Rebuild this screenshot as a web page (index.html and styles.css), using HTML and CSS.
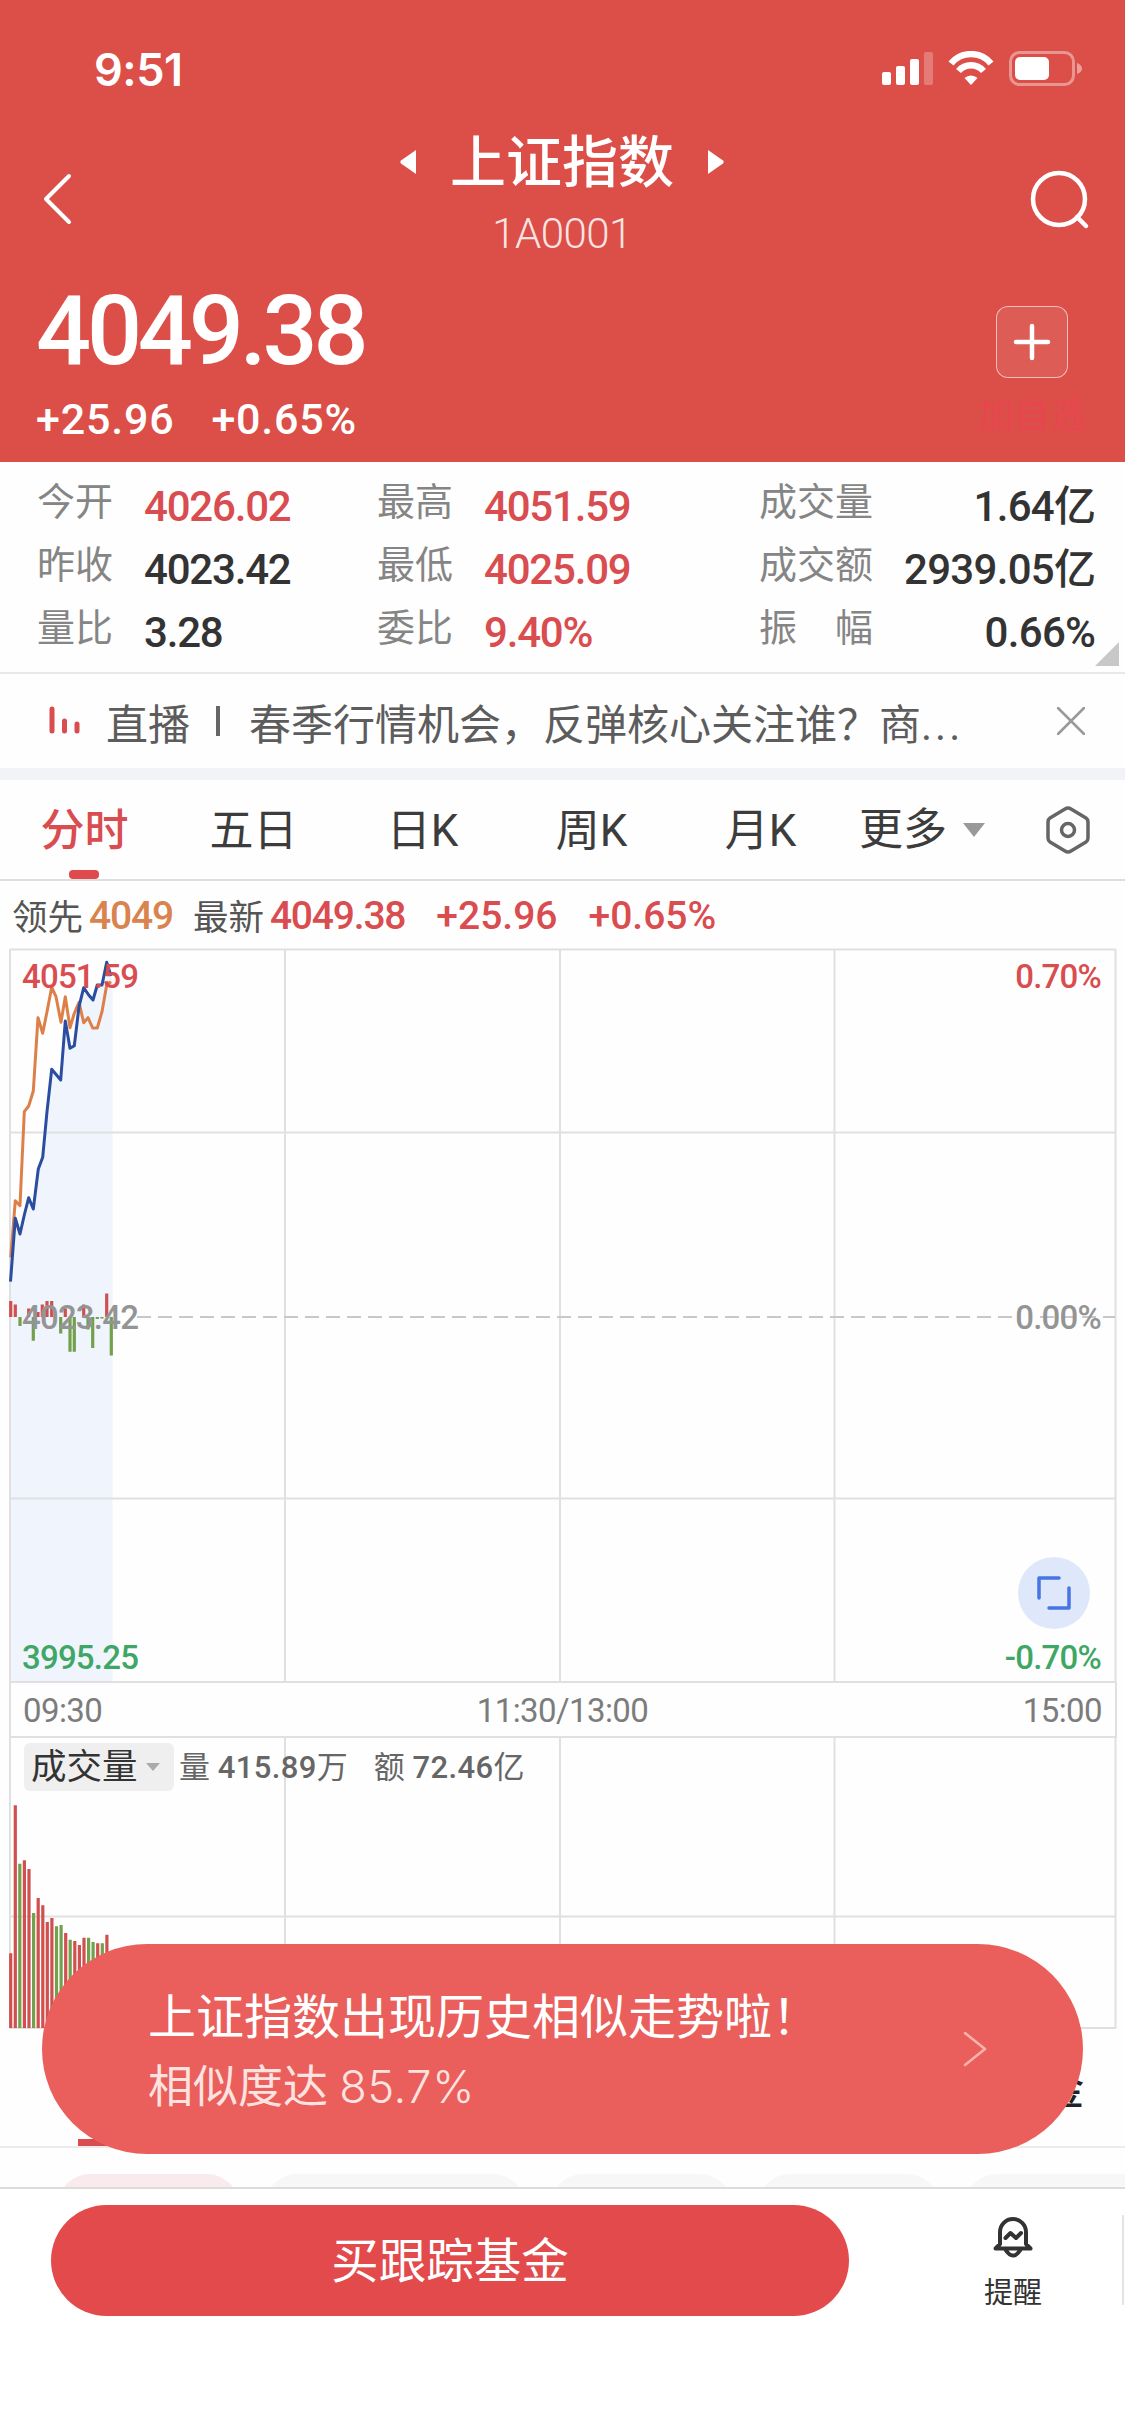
FILE: index.html
```html
<!DOCTYPE html>
<html lang="zh-CN">
    <head>
        <meta charset="utf-8">
        <title>上证指数</title>
        <link rel="stylesheet" href="styles.css">
    </head>
    <body>
        <header class="header">
            <div class="status-bar">
                <span class="status-time">9:51</span>
                <svg class="status-icons" width="202" height="36" viewBox="0 0 202 36">
                    <g fill="#fff">
                        <rect x="0" y="21" width="9" height="13" rx="2"/>
                        <rect x="14" y="15" width="9" height="19" rx="2"/>
                        <rect x="28" y="8" width="9" height="26" rx="2"/>
                        <rect x="42" y="1" width="9" height="33" rx="2" opacity=".25"/>
                    </g>
                    <g fill="none" stroke="#fff" stroke-width="6.5">
                        <path d="M69 12.5a26 26 0 0 1 40 0"/>
                        <path d="M76.500 20a16.500 16.500 0 0 1 25 0"/>
                    </g>
                    <path d="M82.500 27a9.500 9.500 0 0 1 13 0l-6.500 7z" fill="#fff"/>
                    <rect x="128.500" y="1.500" width="63" height="32" rx="9" fill="none" stroke="#fff" stroke-width="3" opacity=".4"/>
                    <rect x="133" y="6" width="34" height="23" rx="5" fill="#fff"/>
                    <path d="M195 12q5 2 5 5.500t-5 5.500z" fill="#fff" opacity=".45"/>
                </svg>
            </div>
            <nav class="navbar">
                <svg class="back" width="30" height="52" viewBox="0 0 30 52"><path d="M27 3L4 26l23 23"/></svg>
                <div class="navbar-title">
                    <div class="navbar-name">
                        <svg width="20" height="28" viewBox="0 0 20 28"><path d="M17 2v24L2 15.500q-1.500-1.500 0-3z"/></svg>
                        <h1>上证指数</h1>
                        <svg width="20" height="28" viewBox="0 0 20 28"><path d="M3 2v24l15-10.500q1.500-1.500 0-3z"/></svg>
                    </div>
                    <div class="navbar-code">1A0001</div>
                </div>
                <svg class="search" width="60" height="60" viewBox="0 0 60 60"><circle cx="29" cy="29" r="26"/><path d="M47 47l9 9"/></svg>
            </nav>
            <div class="quote">
                <div>
                    <div class="price">4049.38</div>
                    <div class="change"><span>+25.96</span><span>+0.65%</span></div>
                </div>
                <div class="add">
                    <button type="button" class="add-button">
                        <svg width="40" height="40" viewBox="0 0 40 40"><path d="M20 4v32M4 20h32"/></svg>
                    </button>
                    <span class="add-label">加自选</span>
                </div>
            </div>
        </header>
        <main>
            <section class="stats">
                <div class="stat"><span>今开</span><b class="red">4026.02</b></div>
                <div class="stat"><span>最高</span><b class="red">4051.59</b></div>
                <div class="stat wide"><span>成交量</span><b>1.64亿</b></div>
                <div class="stat"><span>昨收</span><b>4023.42</b></div>
                <div class="stat"><span>最低</span><b class="red">4025.09</b></div>
                <div class="stat wide"><span>成交额</span><b>2939.05亿</b></div>
                <div class="stat"><span>量比</span><b>3.28</b></div>
                <div class="stat"><span>委比</span><b class="red">9.40%</b></div>
                <div class="stat wide"><span>振　幅</span><b>0.66%</b></div>
                <div class="stats-corner"></div>
            </section>
            <section class="news">
                <svg width="32" height="30" viewBox="0 0 32 30"><path d="M3 3v22M15.500 15v10M28 18v7"/></svg>
                <span class="news-tag">直播</span>
                <span class="news-line"></span>
                <span class="news-text">春季行情机会，反弹核心关注谁？商<span class="dots">...</span></span>
                <svg class="news-close" width="28" height="28" viewBox="0 0 28 28"><path d="M1 1l26 26M27 1L1 27"/></svg>
            </section>
            <nav class="tabs">
                <a class="active">分时</a>
                <a>五日</a>
                <a>日K</a>
                <a>周K</a>
                <a>月K</a>
                <a class="more">更多<i></i></a>
                <svg width="46" height="50" viewBox="0 0 46 50"><path d="M23 3q1.500 0 3 1l15 9q2 1.300 2 4v16q0 2.700-2 4l-15 9q-3 2-6 0l-15-9q-2-1.300-2-4V17q0-2.700 2-4l15-9q1.500-1 3-1z"/><circle cx="23" cy="25" r="6.500"/></svg>
            </nav>
            <div class="legend">
                <span>领先</span><b class="orange">4049</b>
                <span class="latest">最新</span><b>4049.38</b><b class="diff">+25.96</b><b class="rate">+0.65%</b>
            </div>

            <section class="chart">
                <svg class="plot" width="1125" height="735" viewBox="0 0 1125 735">
                    <path class="area" d="M10.500 333.700L15.300 270.300 20 286 24.300 267 28.700 249.700 33.300 261 38.300 221 42.700 209.300 47 163.700 51.700 121.300 60.700 132 65.300 73 70 100.300 74.300 97.700 79 58.700 83.700 39.700 88.700 47 93 52 97.300 37 102 37 106.700 14.300 112.500 33V734H10.500z"/>
                    <path class="grid" d="M10 1.500H1115.500V734H10zM285 1V734M560 1V734M834.500 1V734M10 184.500H1115M10 550.500H1115"/>
                    <path class="zero" d="M137 369H1018M1040 369H1115"/>
                    <path class="up" d="M10.700 369V353M15.300 369V356.500M28.700 369V360.500M38 369V364M42.300 369V356.500M47 369V353M51.700 369V353M65.300 369V360.500M83.700 369V356.500M106.700 369V345.500"/>
                    <path class="down" d="M20 369V378M33.300 369V392.700M60.700 369V385.500M70 369V403.700M74.300 369V403.700M88 369V381.500M92.700 369V400M97.300 369V371M102 369V370.500M111.300 369V407.500"/>
                    <path class="line-lead" d="M10.700 309.300L15.300 252.700 20 257.700 24.300 163.700 28.700 158 33.300 143 38 69.700 42.700 85.300 47 63.700 51.700 39.300 56 48.700 61 74.300 65.300 48.700 70 79.700 74.300 65.300 79 54.300 83.700 74.700 88 69.700 92.700 80 97.300 80 102 63.700 106.700 37 111 33.700"/>
                    <path class="line-price" d="M10.500 333.700L15.300 270.300 20 286 24.300 267 28.700 249.700 33.300 261 38.300 221 42.700 209.300 47 163.700 51.700 121.300 60.700 132 65.300 73 70 100.300 74.300 97.700 79 58.700 83.700 39.700 88.700 47 93 52 97.300 37 102 37 106.700 14.300 111 28"/>
                </svg>
                <div class="scale">
                    <div class="scale-row red"><span>4051.59</span><span>0.70%</span></div>
                    <div class="scale-row"><span>4023.42</span><span>0.00%</span></div>
                    <div class="scale-row green"><span>3995.25</span><span>-0.70%</span></div>
                </div>
                <button type="button" class="expand">
                    <svg width="34" height="34" viewBox="0 0 34 34"><path d="M2 22V2h20M32 12v20H12"/></svg>
                </button>
            </section>
            <div class="times"><span>09:30</span><span>11:30/13:00</span><span>15:00</span></div>

            <section class="volume">
                <svg class="plot" width="1125" height="292" viewBox="0 0 1125 292">
                    <path class="grid" d="M10 0V290H1115.500V0M285 0V290M560 0V290M834.500 0V290M10 178.500H1115"/>
                    <path class="up" d="M10.700 290V215.300M15.300 290V67.300M24.400 290V122.300M29 290V131M38.200 290V160M42.800 290V167.300M47.300 290V184M51.900 290V180M65.700 290V195M74.800 290V203M79.400 290V207M84 290V199.700M97.700 290V205.300M106.900 290V196.700"/>
                    <path class="down" d="M19.800 290V125.700M33.600 290V175M56.500 290V188.300M61.100 290V187M70.200 290V201.700M88.600 290V199.700M93.100 290V204M102.300 290V205.300"/>
                </svg>
                <div class="volume-head">
                    <span class="volume-type">成交量<i></i></span>
                    <span class="volume-num">量 <em>415.89</em>万</span>
                    <span class="volume-sum">额 <em>72.46</em>亿</span>
                </div>
            </section>

            <section class="related">
                <div class="related-tabs"><span>基金</span></div>
                <div class="chips">
                    <i class="chip on"></i><i class="chip c2"></i><i class="chip"></i><i class="chip"></i><i class="chip c5"></i>
                </div>
            </section>
        </main>
        <footer class="footer">
            <a class="buy">买跟踪基金</a>
            <a class="remind">
                <svg width="42" height="44" viewBox="0 0 42 44"><path d="M8 29V17a13 13 0 0 1 26 0v12l4.500 4.500h-35zM13 34q8 13 16 0M13.500 23l5-5 5.500 5 5-5"/></svg>
                <span>提醒</span>
            </a>
        </footer>
        <aside class="toast">
            <div>
                <div class="toast-title">上证指数出现历史相似走势啦！</div>
                <div class="toast-text">相似度达 <span>85.7%</span></div>
            </div>
            <svg width="24" height="36" viewBox="0 0 24 36"><path d="M2 2l20 16L2 34"/></svg>
        </aside>
    </body>
</html>
```

FILE: styles.css
```css
:root {
    --header: #db4f48;
    --red: #d94c4f;
    --green: #3fa765;
    --line: #e0e0e2;
    --num: Roboto, "Noto Sans CJK SC", sans-serif;
}

*, *::before, *::after {
    box-sizing: border-box;
}

body {
    position: relative;
    margin: 0;
    width: 1125px;
    height: 2436px;
    overflow: hidden;
    background: #fefefe;
    color: #333;
    font-family: var(--num);
    white-space: nowrap;
}

svg {
    display: block;
    flex: none;
    fill: none;
    stroke-linecap: round;
    stroke-linejoin: round;
}

button {
    padding: 0;
    display: flex;
    align-items: center;
    justify-content: center;
}

b {
    font-weight: 500;
}

.red {
    color: var(--red);
}

/* header */
.header {
    height: 462px;
    background: var(--header);
    color: #fff;
}

.status-bar {
    display: flex;
    justify-content: space-between;
    height: 128px;
    padding: 51px 41px 0 94px;
}

.status-time {
    margin-top: -8px;
    font: 600 45px/54px Inter, sans-serif;
    letter-spacing: -0.5px;
}

.status-icons {
    stroke-linecap: butt;
}

.navbar {
    display: flex;
    justify-content: space-between;
    height: 148px;
    padding: 0 35px 0 42px;
}

.back {
    margin-top: 45px;
    stroke: #fff;
    stroke-width: 4;
}

.search {
    margin-top: 42px;
    stroke: #fff;
    stroke-width: 4.500;
}

.navbar-title {
    display: flex;
    flex-direction: column;
    align-items: center;
    margin-left: 22px;
}

.navbar-name {
    display: flex;
    align-items: center;
    gap: 31px;
    height: 68px;
}

.navbar-name svg {
    fill: #fff;
}

.navbar-name h1 {
    margin: 0;
    padding-top: 2px;
    font-size: 56px;
    font-weight: 500;
    line-height: 68px;
}

.navbar-code {
    margin-top: 13px;
    font-size: 42px;
    font-weight: 300;
    line-height: 50px;
    letter-spacing: -0.5px;
    opacity: .85;
}

.quote {
    display: flex;
    justify-content: space-between;
    padding: 0 35px 0 36px;
}

.price {
    margin-top: 5px;
    font-size: 97px;
    font-weight: 500;
    line-height: 100px;
    letter-spacing: -4.200px;
}

.change {
    display: flex;
    gap: 37px;
    margin-top: 12px;
    font-size: 43px;
    font-weight: 500;
    line-height: 52px;
    letter-spacing: 0.8px;
}

.add {
    display: flex;
    flex-direction: column;
    align-items: center;
    width: 116px;
    padding-top: 30px;
}

.add-button {
    width: 72px;
    height: 72px;
    border: 1.500px solid rgba(255, 255, 255, .6);
    border-radius: 12px;
    background: rgba(255, 255, 255, .08);
}

.add-button svg {
    stroke: #fff;
    stroke-width: 4.500;
}

.add-label {
    margin-top: 16px;
    font-size: 36px;
    line-height: 44px;
    color: #e9454f;
}

/* stats */
.stats {
    position: relative;
    display: grid;
    grid-template-columns: 340px 382px 1fr;
    grid-auto-rows: 63px;
    height: 212px;
    padding: 10px 32px 0 37px;
    border-bottom: 2px solid #e8e8ea;
}

.stat {
    display: flex;
    align-items: center;
    gap: 31px;
    line-height: 59px;
}

.stat span {
    margin-top: -2px;
    font-size: 38px;
    color: #858585;
}

.stat b {
    padding-top: 5px;
    font-size: 42px;
    letter-spacing: -1.200px;
}

.stat.wide {
    justify-content: space-between;
}

.stat.wide b {
    letter-spacing: -0.7px;
}

.stats-corner {
    position: absolute;
    right: 6px;
    bottom: 6px;
    border: solid transparent;
    border-width: 12px;
    border-right-color: #c8c8c8;
    border-bottom-color: #c8c8c8;
}

/* news */
.news {
    display: flex;
    align-items: center;
    height: 106px;
    padding: 0 40px 0 49px;
    border-bottom: 12px solid #f2f3f7;
    font-size: 42px;
    color: #5c5c5c;
}

.news svg {
    stroke: #d94c4f;
    stroke-width: 5;
}

.news-tag {
    margin-left: 25px;
}

.news-line {
    width: 4px;
    height: 30px;
    margin: 0 29px 0 26px;
    background: #666;
}

.dots {
    letter-spacing: 3px;
}

.news .news-close {
    margin-left: auto;
    stroke: #999;
    stroke-width: 2.500;
}

/* period tabs */
.tabs {
    display: flex;
    align-items: center;
    height: 101px;
    padding-right: 34px;
    border-bottom: 2px solid #dedede;
    font-size: 44px;
    color: #3c3c3c;
}

.tabs a {
    position: relative;
    width: 169px;
    height: 99px;
    text-align: center;
    line-height: 102px;
}

.tabs .active {
    color: var(--red);
    font-weight: 500;
}

.tabs .active::after {
    content: "";
    position: absolute;
    left: 69px;
    bottom: 0;
    width: 30px;
    height: 9px;
    border-radius: 4px;
    background: #e04a4d;
}

.tabs .more {
    display: flex;
    align-items: center;
    gap: 16px;
    width: auto;
    margin-left: 14px;
}

.more i, .volume-type i {
    border: solid transparent;
    border-width: 14px 11px 0;
    border-top-color: #999;
}

.tabs svg {
    margin-left: auto;
    stroke: #666;
    stroke-width: 3.500;
}

.legend {
    display: flex;
    align-items: center;
    height: 67px;
    padding-left: 12px;
    font-size: 35.500px;
    color: #555;
}

.legend b {
    margin: 2px 0 0 6px;
    font-size: 39px;
    letter-spacing: -1.200px;
    color: var(--red);
}

.legend .orange {
    color: #d9834f;
}

.legend .latest {
    margin-left: 20px;
}

.legend .diff, .legend .rate {
    margin-left: 31px;
    letter-spacing: 0;
}

/* charts */
.chart, .volume {
    position: relative;
    display: grid;
}

.chart {
    height: 734px;
}

.chart > *, .volume > * {
    grid-area: 1 / 1;
}

.plot {
    stroke-linecap: butt;
}

.grid {
    stroke: var(--line);
    stroke-width: 2;
}

.area {
    fill: #eff4fd;
}

.zero {
    stroke: #c8c8cc;
    stroke-width: 2;
    stroke-dasharray: 14 7;
}

.up, .down {
    stroke: #d0504f;
    stroke-width: 3.200;
}

.down {
    stroke: #72a04c;
}

.line-price, .line-lead {
    stroke: #2a4da0;
    stroke-width: 3;
}

.line-lead {
    stroke: #dd8048;
}

.scale {
    display: flex;
    flex-direction: column;
    justify-content: space-between;
    padding: 10px 24px 6px 22px;
    font-size: 33px;
    font-weight: 500;
    line-height: 38px;
    letter-spacing: -0.8px;
    color: #949494;
}

.scale-row {
    display: flex;
    justify-content: space-between;
}

.scale-row.red {
    color: var(--red);
}

.scale-row.green {
    color: var(--green);
}

.expand {
    position: absolute;
    left: 1018px;
    top: 609px;
    width: 72px;
    height: 72px;
    border: 0;
    border-radius: 50%;
    background: #dfe8fb;
}

.expand svg {
    stroke: #4874e4;
    stroke-width: 3.500;
}

.times {
    display: grid;
    grid-template-columns: 1fr 1fr 1fr;
    align-items: center;
    height: 56px;
    margin: 0 8px 0 9px;
    padding: 3px 13px 0 12px;
    border: solid var(--line);
    border-width: 0 2px 2px;
    font-size: 33px;
    letter-spacing: -0.6px;
    color: #7c7c7c;
}

.times span:nth-child(2) {
    text-align: center;
}

.times span:last-child {
    text-align: right;
}

.volume {
    height: 292px;
}

.volume-head {
    display: flex;
    align-items: flex-start;
    padding: 5px 0 0 24px;
    font-size: 31px;
    line-height: 49px;
    color: #666;
}

.volume-type {
    display: flex;
    align-items: center;
    gap: 8px;
    width: 150px;
    height: 48px;
    padding-left: 7px;
    border-radius: 6px;
    background: #efefef;
    font-size: 35.500px;
    color: #333;
}

.volume-type i {
    border-width: 8px 7px 0;
    border-top-color: #aaa;
}

.volume-num {
    margin-left: 5px;
}

.volume-sum {
    margin-left: 26px;
}

.volume em {
    font-style: normal;
    font-weight: 500;
    letter-spacing: 0.4px;
}

.related-tabs {
    display: flex;
    justify-content: flex-end;
    height: 118px;
    padding: 31px 41px 0 0;
    border-bottom: 2px solid #ececec;
    font-size: 40px;
    font-weight: 500;
    line-height: 60px;
    color: #222;
    background: linear-gradient(#d94c4f, #d94c4f) 78px 109px / 60px 7px no-repeat;
}

.chips {
    display: flex;
    gap: 26px;
    height: 40px;
    padding: 26px 0 0 58px;
    overflow: hidden;
}

.chip {
    flex: none;
    width: 181px;
    height: 64px;
    border-radius: 32px;
    background: #f7f7f7;
}

.chip.on {
    background: #f9eaed;
}

.chip.c2 {
    width: 260px;
}

.chip.c5 {
    width: 220px;
}

/* bottom bar */
.footer {
    position: absolute;
    left: 0;
    right: 0;
    bottom: 0;
    display: flex;
    height: 249px;
    padding: 16px 0 0 51px;
    border-top: 2px solid #dcdcdc;
    background: #fff;
}

.buy {
    width: 798px;
    height: 111px;
    border-radius: 56px;
    background: #e34a4c;
    color: #fff;
    font-size: 47.500px;
    line-height: 115px;
    text-align: center;
}

.remind {
    display: flex;
    flex-direction: column;
    align-items: center;
    width: 275px;
    height: 90px;
    margin-top: 10px;
    padding-left: 55px;
    border-right: 2px solid #e4e4e4;
    font-size: 29px;
    line-height: 40px;
}

.remind svg {
    stroke: #333;
    stroke-width: 4;
}

.remind span {
    margin-top: 14px;
}

.toast {
    position: absolute;
    left: 42px;
    top: 1944px;
    display: flex;
    justify-content: space-between;
    align-items: center;
    width: 1041px;
    height: 210px;
    padding: 0 96px 0 106px;
    border-radius: 105px;
    background: #ea5f5c;
    color: #fff;
}

.toast-title {
    padding-top: 7px;
    font-size: 48px;
    line-height: 70px;
}

.toast-text {
    font-size: 45px;
    line-height: 68px;
    color: #fde3e0;
}

.toast-text span {
    font-family: Inter, sans-serif;
    font-weight: 300;
    font-size: 45px;
    letter-spacing: 0.7px;
}

.toast svg {
    stroke: #f9b3ae;
    stroke-width: 2.500;
}
```
